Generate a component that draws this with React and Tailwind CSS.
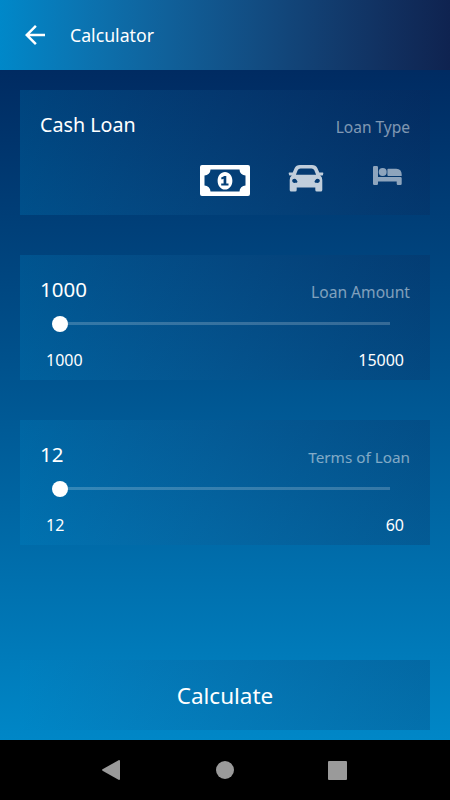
import { useState } from "react";
import { clsx } from "clsx";
import { MdArrowBack } from "react-icons/md";

const CARD = "bg-linear-to-r from-[#0088c9]/24 to-[#0f2350]/22";

function BillIcon() {
  return (
    <svg width="50" height="31" viewBox="0 0 50 31" fill="currentColor">
      <path fillRule="evenodd" d="M2 0h46a2 2 0 0 1 2 2v27a2 2 0 0 1-2 2H2a2 2 0 0 1-2-2V2a2 2 0 0 1 2-2zM10.500 4.500a6 6 0 0 1-6 6v10a6 6 0 0 1 6 6h29a6 6 0 0 1 6-6v-10a6 6 0 0 1-6-6z" />
      <path fillRule="evenodd" d="M25 7c4.200 0 7.400 3.800 7.400 8.800s-3.200 8.800-7.400 8.800-7.400-3.800-7.400-8.800 3.200-8.800 7.400-8.800zM24.300 11l-3.300 1.700.7 1.800 1.900-.7v4.800h-2.400v2h7.300v-2H26.300V11z" />
    </svg>
  );
}

function CarIcon() {
  return (
    <svg width="36" height="27" viewBox="0 0 36 27" fill="currentColor">
      <path fillRule="evenodd" d="M12 0h12q4 0 5.300 3l2 4.600h3.400q.8 0 .6.800l-.4 1.500q-.2.700-1 .700h-1.700q2.100 1.500 2.100 4.400V25q0 1.500-1.500 1.500h-4Q27.300 26.500 27.300 25v-2.500H8.700V25q0 1.500-1.500 1.500h-4Q1.700 26.500 1.700 25V15q0-2.900 2.100-4.400H2.100q-.8 0-1-.7L.7 8.400q-.2-.8.6-.8h3.400l2-4.600Q8 0 12 0zM12.500 3.500q-2 0-2.800 1.800L7.900 9.800h20.200l-1.800-4.500q-.8-1.800-2.800-1.800zM6.600 13.700c-1.500 0-2.400.9-2.400 2.100s.9 2.100 2.500 2.100c1.400 0 2.800-.1 2.800-1.100s-1.500-3.100-2.900-3.100zM29.400 13.700c-1.400 0-2.900 2.100-2.900 3.100s1.400 1.100 2.800 1.100c1.600 0 2.500-.9 2.500-2.100s-.9-2.100-2.400-2.100z" />
    </svg>
  );
}

function BedIcon() {
  return (
    <svg width="29" height="19" viewBox="0 0 29 19" fill="currentColor">
      <path d="M1.200 0h2.600Q5 0 5 1.200V11h22.500q1.200 0 1.200 1.200v5.600q0 1.200-1.200 1.200h-2.600q-1.200 0-1.200-1.200V15.500H5v2.300Q5 19 3.800 19H1.200Q0 19 0 17.800V1.200Q0 0 1.200 0z" />
      <circle cx="9.700" cy="5.900" r="4" />
      <path d="M15.200 2.800h8q5.500.3 5.500 5.800V10H15.300q-.9 0-.9-.9V3.600q0-.8.800-.8z" />
    </svg>
  );
}

const TYPES = [
  { id: "cash", title: "Cash Loan", icon: <BillIcon />, box: "w-[50px] pt-px", dim: "opacity-70" },
  { id: "car", title: "Car Loan", icon: <CarIcon />, box: "w-[113px] pr-px pb-[4px]", dim: "opacity-75" },
  { id: "home", title: "Home Loan", icon: <BedIcon />, box: "w-[47px] pl-[2px] pb-[9px]", dim: "opacity-55" },
];

function SliderCard({ label, labelClass, min, max }) {
  const [value, setValue] = useState(min);
  const pct = ((value - min) / (max - min)) * 100;

  return (
    <section className={clsx(CARD, "h-[125px] px-5 pt-5")}>
      <div className="flex justify-between h-[34px]">
        <span className="text-[20.5px] leading-[28px]">{value}</span>
        <span className={clsx("leading-[35px] text-white/50", labelClass)}>{label}</span>
      </div>
      <div className="relative mx-5 h-[30px] flex items-center">
        <div className="w-full h-[3px] -mt-px bg-white/20" />
        <div className="absolute top-[7px] size-4 -ml-2 rounded-full bg-white" style={{ left: `${pct}%` }} />
        <input type="range" min={min} max={max} value={value} onChange={(e) => setValue(+e.target.value)} className="absolute inset-0 w-full opacity-0" />
      </div>
      <div className="flex justify-between px-1.5 text-[16px] leading-[42px]">
        <span>{min}</span>
        <span>{max}</span>
      </div>
    </section>
  );
}

export default function App() {
  const [type, setType] = useState("cash");
  const current = TYPES.find((t) => t.id === type);

  return (
    <div className="w-[450px] h-[800px] flex flex-col overflow-hidden bg-black text-white font-['Noto_Sans',sans-serif]">
      <header className="h-[70px] shrink-0 flex items-center pl-5 bg-linear-to-r from-[#0088c9] to-[#0f2350]">
        <MdArrowBack className="size-[30px]" />
        <h1 className="ml-5 text-[17.700px]">Calculator</h1>
      </header>

      <main className="flex-1 flex flex-col gap-10 px-5 pt-5 pb-2.5 bg-linear-to-b from-[#002b62] to-[#0087c7]">
        <section className={clsx(CARD, "h-[125px] px-5 pt-5")}>
          <div className="flex justify-between h-[50px]">
            <span className="text-[19.700px] leading-[30px]">{current.title}</span>
            <span className="text-[15.5px] leading-[35px] text-white/50">Loan Type</span>
          </div>
          <div className="flex justify-end h-10">
            {TYPES.map((t) => (
              <button
                key={t.id}
                onClick={() => setType(t.id)}
                className={clsx("flex items-center justify-center", t.box, t.id !== type && t.dim)}
              >
                {t.icon}
              </button>
            ))}
          </div>
        </section>
        <SliderCard label="Loan Amount" labelClass="text-[15.600px]" min={1000} max={15000} />
        <SliderCard label="Terms of Loan" labelClass="text-[15.300px]" min={12} max={60} />
        <button className={clsx(CARD, "mt-auto h-[70px] shrink-0 pt-px text-[22.5px]")}>Calculate</button>
      </main>

      <nav className="h-[60px] shrink-0 flex items-center pl-[102px] text-[#9a9a9a]">
        <svg width="18" height="20" viewBox="0 0 18 20" fill="currentColor"><path d="M17 0q1 0 1 1v18q0 1-1 1L.5 10.700q-.8-.7 0-1.400z" /></svg>
        <div className="ml-24 size-[18px] rounded-full bg-current" />
        <div className="ml-[94px] size-[19px] rounded-[1px] bg-current" />
      </nav>
    </div>
  );
}
